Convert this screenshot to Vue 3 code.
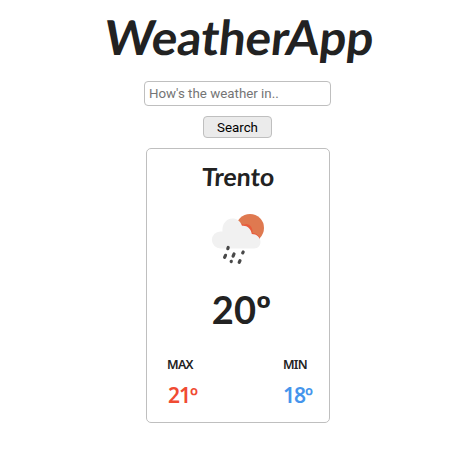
<script setup>
import { ref } from 'vue'

const query = ref('')
const city = ref('Trento')
const weather = ref({ current: 20, max: 21, min: 18 })
</script>

<template>
  <main class="app">
    <h1>WeatherApp</h1>
    <form class="search" @submit.prevent>
      <input v-model="query" type="text" placeholder="How's the weather in.." />
      <button type="submit">Search</button>
    </form>
    <section class="card">
      <h2>{{ city }}</h2>
      <svg class="icon" viewBox="0 0 76 66" width="76" height="66">
        <circle cx="50" cy="23" r="14" fill="#df7950" />
        <path
          d="M36 20.5Q40 17.5 44 19.8Q47 17.8 50 20.5Q53 23.5 52.5 28Q57 28 60 33L56 43H36Z"
          fill="#e85c3c"
        />
        <path
          d="M20.5 43.5a8.5 8.5 0 0 1-.2-17h2.2c-.7-7 3.500-13 10-13 4.500 0 8 2.700 9.500 7.300 5-.6 9 2.700 9.800 8.200C56.500 29 60.500 32.500 60.500 37c0 3.700-2.800 6.500-6.500 6.500Z"
          fill="#f1f1f1"
        />
        <g stroke="#494949" stroke-width="3.200" stroke-linecap="round">
          <path d="M28.200 42.500l-.4 1.200M25.500 50.300l-.9 2M34 49l-.9 2.200M43.200 47l-.5 .8M31.300 56.300l-.1 .2M40 55.600l-.8 1.800" />
        </g>
      </svg>
      <p class="current">{{ weather.current }}º</p>
      <div class="range">
        <div class="reading max">
          <h3>MAX</h3>
          <p>{{ weather.max }}º</p>
        </div>
        <div class="reading min">
          <h3>MIN</h3>
          <p>{{ weather.min }}º</p>
        </div>
      </div>
    </section>
  </main>
</template>

<style>
body {
  margin: 0;
  background: #fff;
}
</style>

<style scoped>
.app {
  display: flex;
  flex-direction: column;
  align-items: center;
  padding: 8px 0 0 9px;
  color: #222;
  font-family: Lato, sans-serif;
}
h1,
h2,
h3,
p {
  margin: 0;
}
h1 {
  height: 73px;
  font-size: 48px;
  line-height: 58px;
  font-weight: 700;
  letter-spacing: -0.2px;
  white-space: nowrap;
  transform: skewX(-6deg);
}
.search {
  display: flex;
  flex-direction: column;
  align-items: center;
  gap: 10px;
  margin-right: 1px;
}
input,
button {
  box-sizing: border-box;
  border: 1px solid #bfbfbf;
  border-radius: 4px;
  font: 13.333px Roboto, sans-serif;
}
input {
  width: 187px;
  height: 25px;
  padding: 0 4px;
  background: #fff;
  outline: none;
}
input::placeholder {
  color: #757575;
}
button {
  width: 69px;
  height: 22px;
  padding: 0;
  background: #ebebeb;
  color: #000;
}
.card {
  display: flex;
  flex-direction: column;
  align-items: center;
  box-sizing: border-box;
  width: 184px;
  height: 275px;
  margin-top: 10px;
  border: 1px solid #bfbfbf;
  border-radius: 5px;
}
h2 {
  height: 56px;
  padding-top: 11px;
  box-sizing: border-box;
  font-size: 25px;
  line-height: 32px;
  font-weight: 700;
  transform: skewX(-3deg);
}
.icon {
  display: block;
}
.current {
  height: 83px;
  padding: 15px 0 0 7px;
  box-sizing: border-box;
  font-size: 38px;
  line-height: 46px;
  font-weight: 700;
}
.range {
  display: flex;
  justify-content: space-between;
  align-self: stretch;
  padding: 1px 17px 0 20px;
}
.reading {
  display: flex;
  flex-direction: column;
  align-items: center;
}
h3 {
  padding-right: 5px;
  font: 600 12.500px/20px "Noto Sans", sans-serif;
  letter-spacing: -0.7px;
}
.reading p {
  padding-top: 7px;
  font: 600 21px/26px "Noto Sans", sans-serif;
  letter-spacing: -1px;
}
.max p {
  color: #f04b32;
}
.min p {
  color: #4595ec;
}
</style>
